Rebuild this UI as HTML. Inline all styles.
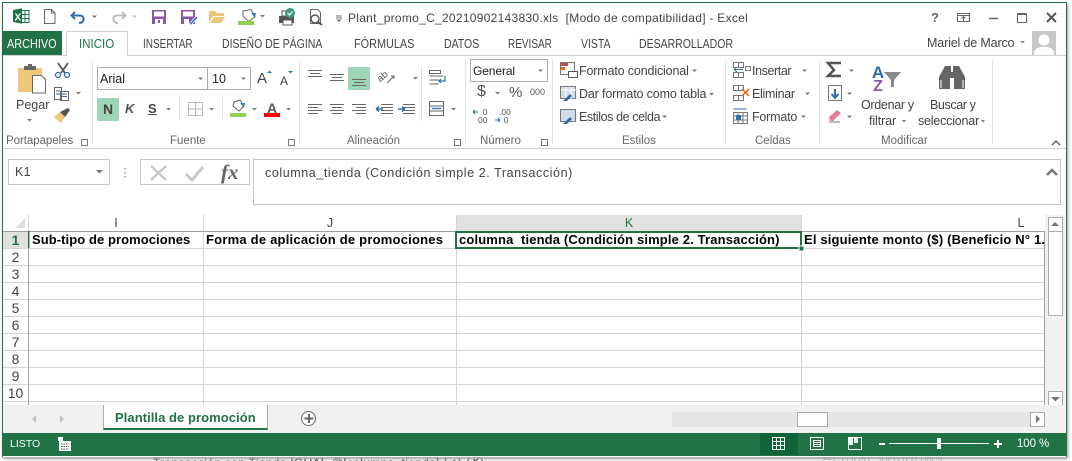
<!DOCTYPE html>
<html><head><meta charset="utf-8">
<style>
html,body{margin:0;padding:0;width:1072px;height:461px;overflow:hidden;background:#fff;}
#s{position:absolute;left:0;top:0;width:1072px;height:461px;overflow:hidden;font-family:"Liberation Sans",sans-serif;}
.t{position:absolute;white-space:nowrap;font-family:"Liberation Sans",sans-serif;font-size:12px;color:#444;line-height:14px;}
.m{font-size:12.5px;color:#444;letter-spacing:-.15px}
.tab{font-size:12.5px;color:#444;transform:scaleX(.84);transform-origin:left center}
.g{color:#666;font-size:11.5px;letter-spacing:0}
.b{font-weight:bold;font-size:13px;color:#000;line-height:16px}
.c{color:#444;text-align:center;font-size:12.5px}
.r{position:absolute;}
.n{position:absolute;left:3px;width:25px;text-align:center;font:14px "Liberation Sans",sans-serif;color:#444;line-height:16px}
svg{position:absolute;left:0;top:0}
</style></head><body><div id="s">

<!-- behind window -->
<div class="t" style="left:153px;top:456px;font-size:12px;color:#333;letter-spacing:.3px">Transacción con Tienda IGUAL @[columna_tienda] (✓) (✗)</div>
<div class="t" style="left:822px;top:452px;font-size:15px;color:#ccc;letter-spacing:.7px">Activar Windows</div>

<!-- window -->
<div class="r" style="left:2px;top:2px;width:1063px;height:454px;background:#fff;border:1px solid #217346;border-bottom:0;box-shadow:1px 2px 3px #999"></div>

<!-- tab strip -->
<div class="r" style="left:3px;top:31px;width:59px;height:25px;background:#217346"></div>
<div class="r" style="left:3px;top:55px;width:1063px;height:1px;background:#d2d2d2"></div>
<div class="r" style="left:66px;top:31px;width:62px;height:25px;background:#fff;border:1px solid #d2d2d2;border-bottom:0;box-sizing:border-box"></div>
<div class="t tab" style="left:7px;top:37px;color:#fff;transform:scaleX(.87)">ARCHIVO</div>
<div class="t tab" style="left:79px;top:37px;color:#217346;transform:scaleX(.92)">INICIO</div>
<div class="t tab" style="left:143px;top:37px;transform:scaleX(.8)">INSERTAR</div>
<div class="t tab" style="left:222px;top:37px;">DISEÑO DE PÁGINA</div>
<div class="t tab" style="left:354px;top:37px;transform:scaleX(.87)">FÓRMULAS</div>
<div class="t tab" style="left:444px;top:37px;">DATOS</div>
<div class="t tab" style="left:508px;top:37px;transform:scaleX(.8)">REVISAR</div>
<div class="t tab" style="left:581px;top:37px;">VISTA</div>
<div class="t tab" style="left:639px;top:37px;">DESARROLLADOR</div>
<div class="t" style="left:927px;top:36px;font-size:12.5px;letter-spacing:-.15px">Mariel de Marco</div>

<!-- title -->
<div class="t" style="left:348px;top:11px;font-size:12px;letter-spacing:.28px;color:#444">Plant_promo_C_20210902143830.xls&nbsp; [Modo de compatibilidad] - Excel</div>

<!-- ribbon bottom -->
<div class="r" style="left:3px;top:148px;width:1063px;height:1px;background:#d2d2d2"></div>
<!-- group separators -->
<div class="r" style="left:92px;top:60px;width:1px;height:84px;background:#e1e1e1"></div>
<div class="r" style="left:299px;top:60px;width:1px;height:84px;background:#e1e1e1"></div>
<div class="r" style="left:465px;top:60px;width:1px;height:84px;background:#e1e1e1"></div>
<div class="r" style="left:552px;top:60px;width:1px;height:84px;background:#e1e1e1"></div>
<div class="r" style="left:725px;top:60px;width:1px;height:84px;background:#e1e1e1"></div>
<div class="r" style="left:819px;top:60px;width:1px;height:84px;background:#e1e1e1"></div>
<div class="r" style="left:992px;top:60px;width:1px;height:84px;background:#e1e1e1"></div>
<div class="r" style="left:421px;top:66px;width:1px;height:55px;background:#e1e1e1"></div>
<div class="r" style="left:179px;top:98px;width:1px;height:22px;background:#e1e1e1"></div>
<div class="r" style="left:222px;top:98px;width:1px;height:22px;background:#e1e1e1"></div>

<!-- group labels -->
<div class="t g" style="left:6px;top:134px;letter-spacing:-.05px">Portapapeles</div>
<div class="t g" style="left:170px;top:134px">Fuente</div>
<div class="t g" style="left:347px;top:134px">Alineación</div>
<div class="t g" style="left:480px;top:134px">Número</div>
<div class="t g" style="left:622px;top:134px">Estilos</div>
<div class="t g" style="left:755px;top:134px">Celdas</div>
<div class="t g" style="left:881px;top:134px">Modificar</div>

<!-- font controls -->
<div class="r" style="left:97px;top:67px;width:111px;height:23px;border:1px solid #ababab;box-sizing:border-box"></div>
<div class="r" style="left:207px;top:67px;width:44px;height:23px;border:1px solid #ababab;box-sizing:border-box"></div>
<div class="t" style="left:100px;top:72px;font-size:12.5px;color:#222">Arial</div>
<div class="t" style="left:212px;top:72px;font-size:12.5px;color:#222">10</div>
<div class="r" style="left:97px;top:98px;width:22px;height:23px;background:#9fd5b7"></div>
<div class="t" style="left:103px;top:102px;font-weight:bold;font-size:14px;color:#444">N</div>
<div class="t" style="left:125px;top:102px;font-weight:bold;font-style:italic;font-size:13px;color:#555">K</div>
<div class="t" style="left:148px;top:102px;font-weight:bold;font-size:13px;color:#444;text-decoration:underline">S</div>
<div class="t" style="left:257px;top:72px;font-size:15px;color:#444">A</div>
<div class="t" style="left:280px;top:74px;font-size:12px;color:#444">A</div>
<div class="t" style="left:267px;top:101px;font-weight:bold;font-size:14px;color:#555">A</div>
<div class="r" style="left:264px;top:113px;width:16px;height:4px;background:#f00"></div>
<div class="r" style="left:230px;top:113px;width:16px;height:4px;background:#92d050"></div>
<div class="t" style="left:16px;top:98px;font-size:12.5px;">Pegar</div>

<!-- alignment highlighted -->
<div class="r" style="left:348px;top:67px;width:22px;height:23px;background:#9fd5b7"></div>

<!-- number -->
<div class="r" style="left:470px;top:59px;width:78px;height:23px;border:1px solid #ababab;box-sizing:border-box"></div>
<div class="t" style="left:473px;top:64px;font-size:12px;color:#222;letter-spacing:-.1px">General</div>
<div class="t" style="left:477px;top:85px;font-size:16px;color:#555">$</div>
<div class="t" style="left:509px;top:86px;font-size:15px;color:#555">%</div>
<div class="t" style="left:530px;top:85px;font-size:9px;color:#555">000</div>
<div class="t" style="left:478px;top:108px;font-size:8.5px;line-height:8px;color:#555;">&nbsp;&nbsp;0<br>00</div>
<div class="t" style="left:499px;top:108px;font-size:8.5px;line-height:8px;color:#555">.00<br>&nbsp;&nbsp;0</div>

<!-- styles -->
<div class="t m" style="left:579px;top:64px">Formato condicional</div>
<div class="t m" style="left:579px;top:87px;letter-spacing:-.15px">Dar formato como tabla</div>
<div class="t m" style="left:579px;top:110px;letter-spacing:-.4px">Estilos de celda</div>
<!-- cells -->
<div class="t m" style="left:752px;top:64px;letter-spacing:-.4px">Insertar</div>
<div class="t m" style="left:752px;top:87px;letter-spacing:-.3px">Eliminar</div>
<div class="t m" style="left:752px;top:110px;letter-spacing:-.2px">Formato</div>
<!-- edit -->
<div class="t m" style="left:861px;top:98px;letter-spacing:-.3px">Ordenar y</div>
<div class="t m" style="left:869px;top:114px;letter-spacing:-.1px">filtrar</div>
<div class="t m" style="left:930px;top:98px;letter-spacing:-.4px">Buscar y</div>
<div class="t m" style="left:918px;top:114px;letter-spacing:-.2px">seleccionar</div>

<!-- formula bar -->
<div class="r" style="left:8px;top:159px;width:102px;height:26px;border:1px solid #c6c6c6;box-sizing:border-box"></div>
<div class="t" style="left:15px;top:165px;font-size:12.5px;letter-spacing:.3px">K1</div>
<div class="r" style="left:140px;top:159px;width:110px;height:26px;border:1px solid #c6c6c6;box-sizing:border-box"></div>
<div class="r" style="left:253px;top:159px;width:808px;height:46px;border:1px solid #c6c6c6;box-sizing:border-box"></div>
<div class="t" style="left:265px;top:166px;font-size:12.5px;letter-spacing:.58px">columna_tienda (Condición simple 2. Transacción)</div>
<div class="t" style="left:221px;top:160px;font:italic bold 21px 'Liberation Serif',serif;line-height:24px;color:#666">fx</div>

<!-- sheet -->
<div class="r" style="left:456px;top:215px;width:345px;height:16px;background:#e1e1e1"></div>
<div class="r" style="left:3px;top:231px;width:25px;height:17px;background:#e1e1e1"></div>
<div class="t c" style="left:29px;top:216px;width:174px;font-size:12.5px">I</div>
<div class="t c" style="left:204px;top:216px;width:252px;font-size:12.5px">J</div>
<div class="t c" style="left:457px;top:216px;width:344px;font-size:12.5px;color:#217346">K</div>
<div class="t c" style="left:1015px;top:216px;width:12px;font-size:12.5px">L</div>

<svg width="1072" height="461" viewBox="0 0 1072 461" style="pointer-events:none">
 <!-- header verticals -->
 <g stroke="#d4d4d4" stroke-width="1" shape-rendering="crispEdges">
  <path d="M28.500 215V231M203.500 215V405M456.500 215V405M801.500 215V405"/>
  <path d="M3 248.500H1044M3 265.500H1044M3 282.500H1044M3 299.500H1044M3 316.500H1044M3 333.500H1044M3 350.500H1044M3 367.500H1044M3 384.500H1044M3 401.500H1044"/>
 </g>
 <g stroke="#9e9e9e" stroke-width="1" shape-rendering="crispEdges" fill="none">
  <path d="M3 231.500H1044.500M28.500 231V405M1044.500 231V405M3 405.500H1045"/>
 </g>
 <path d="M28 231h1.500v17H28z" fill="#217346"/>
 <path d="M25 218V228H16z" fill="#dcdcdc"/>
 <!-- selected cell -->
 <rect x="456" y="232" width="345" height="16" fill="none" stroke="#217346" stroke-width="2" shape-rendering="crispEdges"/>
 <rect x="799" y="246" width="5" height="5" fill="#217346" stroke="#fff" stroke-width="1" shape-rendering="crispEdges"/>

 <!-- qat: excel logo -->
 <path d="M21 10.500h8v12h-8z" fill="#fff" stroke="#217346"/>
 <path d="M25 11v11M21 14.500h8M21 18.500h8" stroke="#217346"/>
 <path d="M13 10l9-1.800v15.600l-9-1.800z" fill="#217346"/>
 <text x="14.500" y="20.500" font-family="Liberation Sans" font-weight="bold" font-size="10" fill="#fff">X</text>
 <!-- new doc -->
 <path d="M44.500 9.500h7l3.500 3.500v10.500h-10.500zM51.500 9.500v3.500h3.500" fill="#fff" stroke="#666"/>
 <!-- undo / redo -->
 <path d="M75 12l-3.500 3.500 3.500 3.500M72 15.500h8c5 0 5 7.500-1 7.500" fill="none" stroke="#2f6eaa" stroke-width="2"/>
 <path d="M122 12l3.500 3.500-3.500 3.500M125 15.500h-8c-5 0-5 7.500 1 7.500" fill="none" stroke="#bdbdbd" stroke-width="2"/>
 <path d="M92 15.500h5l-2.500 2.500z" fill="#777"/><path d="M132 15.500h5l-2.500 2.500z" fill="#bbb"/>
 <!-- save -->
 <path d="M152 10h14v14h-14z" fill="#8c55a8"/><path d="M154 11.500h10v5h-10zM155 19h8v5h-8z" fill="#fff"/><path d="M158 20h2v3h-2z" fill="#8c55a8"/>
 <path d="M181 10h14v14h-14z" fill="#8c55a8"/><path d="M183 11.500h10v5h-10zM184 19h5v5h-5z" fill="#fff"/>
 <path d="M189 24l7-8 2 2-7 7z" fill="#3a7fc1" stroke="#fff" stroke-width=".6"/>
 <!-- folder -->
 <path d="M209 23V11h6l2 2h7v3h-11l-4 7zM210 23l4-6h11l-4 6z" fill="#eec67c"/>
 <!-- fill -->
 <path d="M243 11l8-1.500 4 7-6 5-6-5z" fill="#fff" stroke="#666"/><path d="M251 13h5l-1 5z" fill="#3a7fc1"/>
 <rect x="238" y="21" width="16" height="4" fill="#92d050"/>
 <path d="M260 15h5l-2.500 2.500z" fill="#777"/>
 <!-- print -->
 <path d="M279 16h15v7h-15z" fill="#555"/><path d="M282 11h8v5h-8zM283 20h9v5h-9z" fill="#fff" stroke="#555"/>
 <circle cx="290" cy="13" r="5" fill="#3d9a7b"/><path d="M287.500 13l2 2 3-3.500" stroke="#fff" fill="none" stroke-width="1.200"/>
 <!-- preview -->
 <path d="M310.500 9.500h7l3 3v11h-10z" fill="#fff" stroke="#666"/><circle cx="315" cy="19" r="4" fill="#fff" stroke="#555" stroke-width="1.500"/><path d="M318 22l4 3" stroke="#555" stroke-width="2"/>
 <path d="M336 16h6M336 18h6" stroke="#777"/><path d="M336.500 19.500h5l-2.500 2.500z" fill="#777"/>

 <!-- win controls -->
 <text x="933" y="22" font-family="Liberation Sans" font-weight="bold" font-size="13" fill="#666" text-anchor="middle" dx="2">?</text>
 <path d="M957.500 13.500h12v8h-12zM957.500 15.500h12" fill="none" stroke="#666"/><path d="M963.500 21v-4M961.500 18.500l2-2 2 2" fill="none" stroke="#666"/>
 <path d="M989 18.500h9" stroke="#666" stroke-width="1.500"/>
 <path d="M1017.500 13.500h9v9h-9z" fill="none" stroke="#666"/><path d="M1017 13h10v2h-10z" fill="#666"/>
 <path d="M1047 13l9 9M1056 13l-9 9" stroke="#555" stroke-width="2"/>
 <!-- user avatar -->
 <rect x="1032" y="31" width="24" height="24" fill="#c8c8c8"/>
 <circle cx="1044" cy="40" r="5.500" fill="#fff"/><path d="M1034 55c0-7 4-8 10-8s10 1 10 8z" fill="#fff"/>
 <path d="M1020 41h5l-2.500 2.500z" fill="#888"/>

 <!-- clipboard -->
 <path d="M18 68h24v24H18z" fill="#eec67c"/><path d="M24 66h12v4H24z" fill="#666"/><path d="M28 64h4v3h-4z" fill="#666"/>
 <path d="M32.500 75.500h9l4 4v13.500h-13z" fill="#fff" stroke="#666"/>
 <path d="M27 119h5l-2.500 2.500z" fill="#777"/>
 <!-- scissors -->
 <path d="M58 63l7 10M68 63l-7 10" stroke="#555" stroke-width="1.800"/><circle cx="58" cy="75" r="2.500" fill="none" stroke="#2f6eaa" stroke-width="1.300"/><circle cx="67" cy="75" r="2.500" fill="none" stroke="#2f6eaa" stroke-width="1.300"/>
 <!-- copy -->
 <path d="M54.500 87.500h7v12h-7zM60.500 91.500h8v9h-8z" fill="#fff" stroke="#666"/><path d="M56 91h4M56 94h4M62 94h5M62 96.500h5" stroke="#2f6eaa"/>
 <path d="M76 92h5l-2.500 2.500z" fill="#777"/>
 <!-- format painter -->
 <path d="M54 117l6-5 5 5-4 6z" fill="#eec67c"/><path d="M60 112l8-4 2 2-5 7z" fill="#555"/>
 <!-- dialog launchers -->
 <g fill="none" stroke="#777"><path d="M81.500 139.500h6v6h-6z"/><path d="M288.500 139.500h6v6h-6z"/><path d="M454.500 139.500h6v6h-6z"/><path d="M541.500 139.500h6v6h-6z"/></g>

 <!-- combos arrows -->
 <g fill="#777">
  <path d="M198 77.500h5l-2.500 2.500zM241 77.500h5l-2.500 2.500z"/>
  <path d="M166 108h5l-2.500 2.500zM209 108h5l-2.500 2.500zM252 108h5l-2.500 2.500zM286 108h5l-2.500 2.500z"/>
  <path d="M538 69.500h5l-2.500 2.500zM495 92h5l-2.500 2.500z"/>
  <path d="M692 69.500h5l-2.500 2.500zM709 93h5l-2.500 2.500zM662 115.500h5l-2.500 2.500z"/>
  <path d="M802 69.500h5l-2.500 2.500zM805 92.500h5l-2.500 2.500zM801 115.500h5l-2.500 2.500z"/>
  <path d="M849 69.500h5l-2.500 2.500zM847 92.500h5l-2.500 2.500zM847 115.500h5l-2.500 2.500zM902 120h4l-2 2.500zM981 120h4l-2 2.500z"/>
  <path d="M413 77h5l-2.500 2.500zM451 108h5l-2.500 2.500z"/>
 </g>
 <path d="M267 73l2.500-2.500 2.500 2.500z" fill="#2f6eaa"/><path d="M288 71h5l-2.500 2.500z" fill="#2f6eaa"/>
 <!-- borders -->
 <path d="M188.500 102.500h14v13h-14zM195.500 102.500v13M188.500 109h14" fill="none" stroke="#777" stroke-dasharray="1 1"/>
 <!-- fill ribbon icon -->
 <path d="M234 102l6-2 4 6-5 5-6-5z" fill="#fff" stroke="#666"/><path d="M240 103h5l-1 5z" fill="#3a7fc1"/>

 <!-- align icons -->
 <g stroke="#666" stroke-width="1" shape-rendering="crispEdges">
  <path d="M308 70.500h14M310 73.500h10M308 76.500h14"/>
  <path d="M330 74.500h14M332 77.500h10M330 80.500h14"/>
  <path d="M352 79.500h14M354 82.500h10M352 85.500h14"/>
  <path d="M308 104.500h14M308 107.500h10M308 110.500h14M308 113.500h10"/>
  <path d="M330 104.500h14M332 107.500h10M330 110.500h14M332 113.500h10"/>
  <path d="M352 104.500h14M356 107.500h10M352 110.500h14M356 113.500h10"/>
  <path d="M381 104.500h12M381 107.500h12M381 110.500h12M381 113.500h12"/>
  <path d="M403 104.500h12M403 107.500h12M403 110.500h12M403 113.500h12"/>
 </g>
 <path d="M376 109h7M376 109l3-2.500M376 109l3 2.500M398 109h7M405 109l-3-2.500M405 109l-3 2.500" stroke="#2f6eaa" stroke-width="1.500" fill="none"/>
 <text x="377" y="80" font-family="Liberation Sans" font-size="10" fill="#555" transform="rotate(-40 382 77)">ab</text>
 <path d="M387 83l7-7M391 76h3v3" stroke="#666" fill="none"/>
 <path d="M429.500 70.500h11v3h-11zM429.500 76h14M429.500 80h9M429.500 84h9" fill="none" stroke="#666"/>
 <path d="M445 76v5h-6M441 79l-2 2 2 2" fill="none" stroke="#2f6eaa" stroke-width="1.200"/>
 <path d="M429.500 101.500h14v14h-14z" fill="#fff" stroke="#666"/><path d="M429.500 106h14M429.500 111h14" stroke="#666"/><path d="M432 108.500h9" stroke="#2f6eaa" stroke-width="1.300"/>
 <!-- number arrows -->
 <path d="M473 112h5M473 112l2-2M473 112l2 2M495 120h5M500 120l-2-2M500 120l-2 2" stroke="#2f6eaa" fill="none"/>

 <!-- styles icons -->
 <rect x="560.500" y="62.500" width="14" height="12" fill="#fff" stroke="#777"/><path d="M561 63h7v3h-7z" fill="#c0504d"/><path d="M561 67h4v3h-4z" fill="#e46c0a"/><rect x="568.500" y="71.500" width="9" height="6" fill="#fff" stroke="#555"/>
 <rect x="560.500" y="86.500" width="15" height="12" fill="#cfdce9" stroke="#777"/><path d="M561 90h15M566 87v12M571 87v12" stroke="#fff"/><path d="M563 101l7-7 2 2-5 5z" fill="#2f6eaa"/>
 <rect x="560.500" y="109.500" width="15" height="12" fill="#cfdce9" stroke="#777"/><path d="M563 124l7-7 2 2-5 5z" fill="#2f6eaa"/>
 <!-- cells icons -->
 <path d="M733.500 62.500h5v5h-5zM738.500 62.500h5v5h-5zM733.500 72.500h10v5h-10zM738.500 72.500v5M745.500 66.500h5v4h-5z" fill="#fff" stroke="#777"/><path d="M734 69.500h9M734 69.500l3-2.500M734 69.500l3 2.500" stroke="#2f6eaa" fill="none"/>
 <path d="M733.500 85.500h10v5h-10zM733.500 95.500h10v5h-10zM738.500 85.500v5M738.500 95.500v5" fill="#fff" stroke="#777"/><path d="M742 89l7 7M749 89l-7 7" stroke="#e46c0a" stroke-width="1.500"/>
 <path d="M733.500 112.500h14v11h-14zM733.500 116h14M733.500 120h14M738 112.500v11M743 112.500v11" fill="#fff" stroke="#777"/><rect x="736" y="115" width="5" height="5" fill="#2f6eaa"/><path d="M733.500 109h13" stroke="#2f6eaa"/>
 <!-- sum -->
 <path d="M841 63h-13l6 7-6 6h13" fill="none" stroke="#555" stroke-width="2.500"/>
 <!-- fill down -->
 <rect x="828.500" y="85.500" width="13" height="15" fill="#fff" stroke="#777"/><path d="M835 89v9M831.500 94l3.500 4 3.500-4" fill="none" stroke="#2f6eaa" stroke-width="2"/>
 <!-- eraser -->
 <path d="M829 117l8-7 4 3-8 8h-3z" fill="#ea7e93"/><path d="M829 122h11" stroke="#777"/>
 <!-- sort filter -->
 <text x="878" y="78" font-family="Liberation Sans" font-weight="bold" font-size="17" fill="#2f6eaa" text-anchor="middle">A</text>
 <text x="878" y="91" font-family="Liberation Sans" font-weight="bold" font-size="16" fill="#8c55a8" text-anchor="middle">Z</text>
 <path d="M884 72h17l-7 8v7h-3v-7z" fill="#888"/>
 <!-- binoculars -->
 <path d="M945 66h6v6h2v-6h6l6 11v12h-11V78h-4v11h-11V77z" fill="#666"/>
 <path d="M941 80v8M963 80v8" stroke="#fff"/>
 <!-- ribbon collapse -->
 <path d="M1052 145l4-4 4 4" fill="none" stroke="#666" stroke-width="1.500"/>

 <!-- name box arrow + dots + x check -->
 <path d="M96 170h7l-3.500 3.500z" fill="#777"/>
 <path d="M125 168v1.500M125 172v1.500M125 176v1.500" stroke="#999" stroke-width="1.500"/>
 <path d="M151 166l15 14M166 166l-15 14" stroke="#c8c8c8" stroke-width="2.500"/>
 <path d="M186 174l6 6 11-13" fill="none" stroke="#c8c8c8" stroke-width="3"/>
 <path d="M1047 175l5-5 5 5" fill="none" stroke="#777" stroke-width="2.500"/>
</svg>

<!-- sheet text -->
<div class="t b" style="left:32px;top:232px;letter-spacing:.07px">Sub-tipo de promociones</div>
<div class="t b" style="left:206px;top:232px;letter-spacing:.22px">Forma de aplicación de promociones</div>
<div class="t b" style="left:459px;top:232px;letter-spacing:.145px">columna&nbsp; tienda (Condición simple 2. Transacción)</div>
<div class="t b" style="left:804px;top:232px;letter-spacing:.16px">El siguiente monto ($) (Beneficio N° 1.</div>
<div class="n" style="top:232px;color:#217346;font-weight:bold">1</div>
<div class="n" style="top:249px">2</div><div class="n" style="top:266px">3</div><div class="n" style="top:283px">4</div><div class="n" style="top:300px">5</div><div class="n" style="top:317px">6</div><div class="n" style="top:334px">7</div><div class="n" style="top:351px">8</div><div class="n" style="top:368px">9</div><div class="n" style="top:385px">10</div>

<!-- v scrollbar -->
<div class="r" style="left:1045px;top:215px;width:20px;height:190px;background:#f1f1f1"></div>
<div class="r" style="left:1048px;top:217px;width:15px;height:15px;background:#fff;border:1px solid #ababab;box-sizing:border-box"></div>
<div class="r" style="left:1048px;top:231px;width:15px;height:85px;background:#fff;border:1px solid #ababab;box-sizing:border-box"></div>
<div class="r" style="left:1048px;top:391px;width:15px;height:15px;background:#fff;border:1px solid #ababab;box-sizing:border-box"></div>

<!-- sheet tabs -->
<div class="r" style="left:3px;top:405px;width:1062px;height:28px;background:#f1f1f1"></div>
<div class="r" style="left:103px;top:405px;width:165px;height:25px;background:#fff;border:1px solid #ababab;border-top:0;border-bottom:2px solid #217346;box-sizing:border-box"></div>
<div class="t" style="left:115px;top:410px;font-size:13px;font-weight:bold;color:#217346;letter-spacing:.06px;line-height:16px">Plantilla de promoción</div>
<div class="r" style="left:301px;top:411px;width:15px;height:15px;border:1px solid #666;border-radius:50%;box-sizing:border-box;background:#fff"></div>
<div class="r" style="left:672px;top:412px;width:373px;height:15px;background:#e6e6e6"></div>
<div class="r" style="left:797px;top:412px;width:31px;height:15px;background:#fff;border:1px solid #ababab;box-sizing:border-box"></div>
<div class="r" style="left:1030px;top:412px;width:15px;height:15px;background:#fff;border:1px solid #ababab;box-sizing:border-box"></div>

<!-- status bar -->
<div class="r" style="left:2px;top:433px;width:1064px;height:23px;background:#217346"></div>
<div class="r" style="left:760px;top:433px;width:38px;height:22px;background:#0f6537"></div>
<div class="t" style="left:10px;top:437px;color:#fff;font-size:10.5px">LISTO</div>
<div class="t" style="left:1017px;top:437px;color:#fff;font-size:11.5px;letter-spacing:-.1px">100 %</div>

<svg width="1072" height="461" viewBox="0 0 1072 461" style="pointer-events:none">
 <!-- scrollbar arrows -->
 <path d="M1051 226l4-4 4 4z" fill="#777"/><path d="M1051 397h9l-4.500 4.500z" fill="#777"/>
 <path d="M1036 415v8l4-4z" fill="#777"/>
 <path d="M36 415l-4 4 4 4zM60 415l4 4-4 4z" fill="#c4c4c4"/>
 <path d="M304.500 418.500h9M309 414v9" stroke="#666" stroke-width="2"/>
 <!-- status icons -->
 <rect x="59" y="441" width="12" height="10" fill="#fff"/><rect x="58" y="437" width="5" height="4" fill="#fff"/>
 <path d="M61 444h8M61 446.500h8M61 449h8" stroke="#217346" stroke-dasharray="1.500 1"/>
 <g fill="none" stroke="#fff" shape-rendering="crispEdges">
  <path d="M772.500 437.500h12v12h-12zM776.500 437.500v12M780.500 437.500v12M772.500 441.500h12M772.500 445.500h12"/>
  <path d="M810.500 437.500h13v12h-13zM813.500 440.500h7v6h-7zM814 442.500h6M814 444.500h6"/>
  <path d="M848.500 437.500h13v12h-13z"/>
 </g>
 <path d="M849 438h4v7h-4zM854 438h4v5h-4z" fill="#fff" opacity=".9"/>
 <path d="M889 443.500h100" stroke="#fff" stroke-width="1"/>
 <path d="M879 443h6v2h-6zM994 443h8v2h-8zM997 440h2v8h-2z" fill="#fff"/>
 <rect x="937" y="438" width="4" height="11" fill="#fff"/>
</svg>

</div></body></html>
